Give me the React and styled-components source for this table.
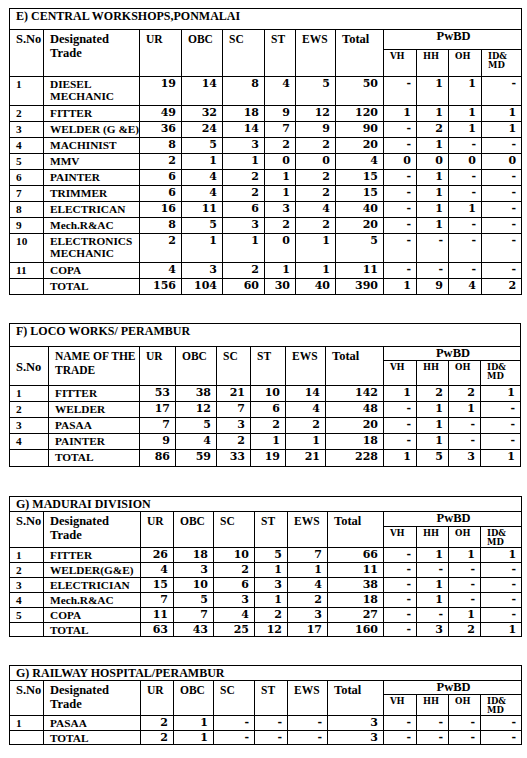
import styled, { createGlobalStyle } from "styled-components";

const GlobalStyle = createGlobalStyle`
  body {
    margin: 0;
    background: #fff;
  }
`;

const SECTIONS = [
  {
    title: "E) CENTRAL WORKSHOPS,PONMALAI",
    top: 8,
    cols: [34, 96, 42, 41, 42, 31, 40, 48, 33, 32, 33, 40],
    h: { title: 21, pw: 20, sub: 27, row: 16, tall: 29, total: 16 },
    trade: "designated",
    rows: [
      ["1", "DIESEL MECHANIC", 19, 14, 8, 4, 5, 50, "-", 1, 1, "-"],
      ["2", "FITTER", 49, 32, 18, 9, 12, 120, 1, 1, 1, 1],
      ["3", "WELDER (G &E)", 36, 24, 14, 7, 9, 90, "-", 2, 1, 1],
      ["4", "MACHINIST", 8, 5, 3, 2, 2, 20, "-", 1, "-", "-"],
      ["5", "MMV", 2, 1, 1, 0, 0, 4, 0, 0, 0, 0],
      ["6", "PAINTER", 6, 4, 2, 1, 2, 15, "-", 1, "-", "-"],
      ["7", "TRIMMER", 6, 4, 2, 1, 2, 15, "-", 1, "-", "-"],
      ["8", "ELECTRICAN", 16, 11, 6, 3, 4, 40, "-", 1, 1, "-"],
      ["9", "Mech.R&AC", 8, 5, 3, 2, 2, 20, "-", 1, "-", "-"],
      ["10", "ELECTRONICS MECHANIC", 2, 1, 1, 0, 1, 5, "-", "-", "-", "-"],
      ["11", "COPA", 4, 3, 2, 1, 1, 11, "-", "-", "-", "-"],
    ],
    total: [156, 104, 60, 30, 40, 390, 1, 9, 4, 2],
  },
  {
    title: "F) LOCO WORKS/ PERAMBUR",
    top: 28,
    cols: [39, 91, 36, 41, 34, 35, 40, 58, 33, 32, 32, 40],
    h: { title: 23, pw: 14, sub: 25, row: 16, total: 17 },
    trade: "name",
    rows: [
      ["1", "FITTER", 53, 38, 21, 10, 14, 142, 1, 2, 2, 1],
      ["2", "WELDER", 17, 12, 7, 6, 4, 48, "-", 1, 1, "-"],
      ["3", "PASAA", 7, 5, 3, 2, 2, 20, "-", 1, "-", "-"],
      ["4", "PAINTER", 9, 4, 2, 1, 1, 18, "-", 1, "-", "-"],
    ],
    total: [86, 59, 33, 19, 21, 228, 1, 5, 3, 1],
  },
  {
    title: "G) MADURAI DIVISION",
    top: 29,
    cols: [34, 97, 33, 40, 41, 33, 40, 56, 33, 32, 32, 41],
    h: { title: 15, pw: 15, sub: 20, row: 15, total: 14 },
    trade: "designated",
    rows: [
      ["1", "FITTER", 26, 18, 10, 5, 7, 66, "-", 1, 1, 1],
      ["2", "WELDER(G&E)", 4, 3, 2, 1, 1, 11, "-", "-", "-", "-"],
      ["3", "ELECTRICIAN", 15, 10, 6, 3, 4, 38, "-", 1, "-", "-"],
      ["4", "Mech.R&AC", 7, 5, 3, 1, 2, 18, "-", 1, "-", "-"],
      ["5", "COPA", 11, 7, 4, 2, 3, 27, "-", "-", 1, "-"],
    ],
    total: [63, 43, 25, 12, 17, 160, "-", 3, 2, 1],
  },
  {
    title: "G) RAILWAY HOSPITAL/PERAMBUR",
    top: 28,
    cols: [34, 97, 33, 40, 41, 33, 40, 56, 33, 32, 32, 41],
    h: { title: 15, pw: 14, sub: 21, row: 15, total: 14 },
    trade: "designated",
    rows: [["1", "PASAA", 2, 1, "-", "-", "-", 3, "-", "-", "-", "-"]],
    total: [2, 1, "-", "-", "-", 3, "-", "-", "-", "-"],
  },
];

const Page = styled.div`
  padding-left: 9px;
  padding-bottom: 12px;
`;

const Table = styled.table`
  border-collapse: collapse;
  table-layout: fixed;
  width: ${(p) => p.$width}px;
  margin-top: ${(p) => p.$top}px;
  font-family: "Liberation Serif", "Times New Roman", serif;
  font-weight: bold;
  color: #000;
`;

const Row = styled.tr`
  height: ${(p) => p.$h}px;
`;

const Cell = styled.td`
  border: 1px solid #000;
  padding: 0 4px 0 6px;
  vertical-align: top;
  text-align: left;
  font-size: 11.5px;
  line-height: 12px;
  overflow: hidden;
`;

const TitleCell = styled(Cell)`
  font-size: 12px;
  line-height: 12px;
  padding: 1px 6px 0;
`;

const HeadCell = styled(Cell)`
  font-size: ${(p) => (p.$big ? 12.5 : 11.5)}px;
  line-height: ${(p) => (p.$tight ? 12 : 14)}px;
  padding-top: ${(p) => (p.$tight ? 0 : 2)}px;
  vertical-align: ${(p) => (p.$mid ? "middle" : "top")};
  text-align: ${(p) => (p.$center ? "center" : "left")};
`;

const SubHead = styled(Cell)`
  font-family: "DejaVu Serif", serif;
  font-size: 8.5px;
  line-height: 9px;
  padding: 2px 4px 0 6px;
`;

const NumCell = styled(Cell)`
  font-family: "DejaVu Serif", serif;
  font-size: 11px;
  text-align: right;
  padding: 1px 5px 0 2px;
`;

const TextCell = styled(Cell)`
  font-size: 11.3px;
  padding: 1px 2px 0 6px;
`;

const Line = styled.span`
  display: block;
  white-space: nowrap;
`;

function TradeHead({ kind }) {
  if (kind === "name") {
    return (
      <>
        <Line>NAME OF THE</Line>
        <Line>TRADE</Line>
      </>
    );
  }
  return (
    <>
      <Line>Designated</Line>
      <Line>Trade</Line>
    </>
  );
}

function Section({ s }) {
  const width = s.cols.reduce((a, b) => a + b, 0);
  return (
    <Table $width={width} $top={s.top}>
      <colgroup>
        {s.cols.map((w, i) => (
          <col key={i} style={{ width: w }} />
        ))}
      </colgroup>
      <tbody>
        <Row $h={s.h.title}>
          <TitleCell colSpan={12}>{s.title}</TitleCell>
        </Row>
        <Row $h={s.h.pw}>
          <HeadCell rowSpan={2} $mid={s.trade === "name"} $big>
            S.No
          </HeadCell>
          <HeadCell rowSpan={2} $big={s.trade !== "name"}>
            <TradeHead kind={s.trade} />
          </HeadCell>
          <HeadCell rowSpan={2}>UR</HeadCell>
          <HeadCell rowSpan={2}>OBC</HeadCell>
          <HeadCell rowSpan={2}>SC</HeadCell>
          <HeadCell rowSpan={2}>ST</HeadCell>
          <HeadCell rowSpan={2}>EWS</HeadCell>
          <HeadCell rowSpan={2} $big>
            Total
          </HeadCell>
          <HeadCell colSpan={4} $center $tight $big>
            PwBD
          </HeadCell>
        </Row>
        <Row $h={s.h.sub}>
          <SubHead>VH</SubHead>
          <SubHead>HH</SubHead>
          <SubHead>OH</SubHead>
          <SubHead>
            <Line>ID&amp;</Line>
            <Line>MD</Line>
          </SubHead>
        </Row>
        {s.rows.map((r) => {
          const tall = r[1].length > 14;
          const words = tall ? r[1].split(" ") : [r[1]];
          return (
            <Row key={r[0]} $h={tall ? s.h.tall : s.h.row}>
              <TextCell>{r[0]}</TextCell>
              <TextCell>
                {words.map((w) => (
                  <Line key={w}>{w}</Line>
                ))}
              </TextCell>
              {r.slice(2).map((v, i) => (
                <NumCell key={i}>{v}</NumCell>
              ))}
            </Row>
          );
        })}
        <Row $h={s.h.total}>
          <TextCell />
          <TextCell>TOTAL</TextCell>
          {s.total.map((v, i) => (
            <NumCell key={i}>{v}</NumCell>
          ))}
        </Row>
      </tbody>
    </Table>
  );
}

export default function App() {
  return (
    <Page>
      <GlobalStyle />
      {SECTIONS.map((s) => (
        <Section key={s.title} s={s} />
      ))}
    </Page>
  );
}
